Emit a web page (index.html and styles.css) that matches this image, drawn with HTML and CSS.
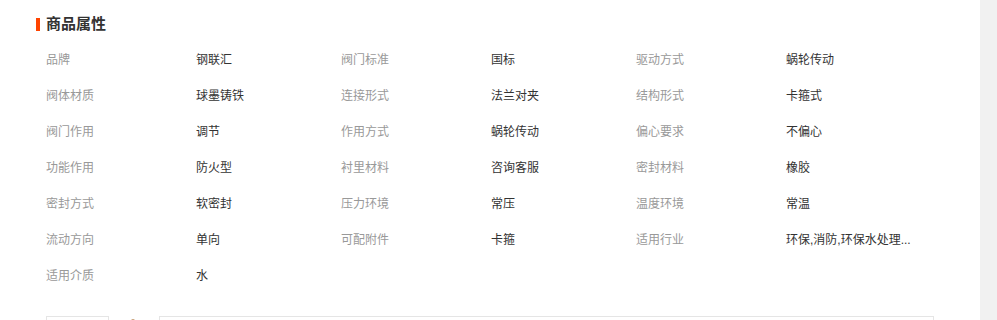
FILE: index.html
```html
<!DOCTYPE html>
<html lang="zh-CN">
<head>
<meta charset="utf-8">
<title>商品属性</title>
<link rel="stylesheet" href="styles.css">
</head>
<body>
<div class="page">
  <div class="main">
    <div class="title"><span class="bar"></span><span class="title-text">商品属性</span></div>
    <div class="attrs">
      <div class="row">
        <span class="label">品牌</span><span class="value">钢联汇</span>
        <span class="label">阀门标准</span><span class="value">国标</span>
        <span class="label">驱动方式</span><span class="value">蜗轮传动</span>
      </div>
      <div class="row">
        <span class="label">阀体材质</span><span class="value">球墨铸铁</span>
        <span class="label">连接形式</span><span class="value">法兰对夹</span>
        <span class="label">结构形式</span><span class="value">卡箍式</span>
      </div>
      <div class="row">
        <span class="label">阀门作用</span><span class="value">调节</span>
        <span class="label">作用方式</span><span class="value">蜗轮传动</span>
        <span class="label">偏心要求</span><span class="value">不偏心</span>
      </div>
      <div class="row">
        <span class="label">功能作用</span><span class="value">防火型</span>
        <span class="label">衬里材料</span><span class="value">咨询客服</span>
        <span class="label">密封材料</span><span class="value">橡胶</span>
      </div>
      <div class="row">
        <span class="label">密封方式</span><span class="value">软密封</span>
        <span class="label">压力环境</span><span class="value">常压</span>
        <span class="label">温度环境</span><span class="value">常温</span>
      </div>
      <div class="row">
        <span class="label">流动方向</span><span class="value">单向</span>
        <span class="label">可配附件</span><span class="value">卡箍</span>
        <span class="label">适用行业</span><span class="value">环保,消防,环保水处理...</span>
      </div>
      <div class="row">
        <span class="label">适用介质</span><span class="value">水</span>
      </div>
    </div>
    <div class="bottom">
      <div class="box box-small"></div>
      <span class="dot"></span>
      <div class="box box-wide"></div>
    </div>
  </div>
  <div class="side"></div>
</div>
</body>
</html>
```

FILE: styles.css
```css
html, body {
  margin: 0;
  padding: 0;
  background: #fff;
  overflow: hidden;
}

body {
  font-family: "Liberation Sans", "Noto Sans CJK SC", sans-serif;
  font-size: 12px;
  color: #333;
}

.page {
  display: flex;
  width: 997px;
  height: 320px;
  overflow: hidden;
}

.main {
  width: 980px;
  flex: none;
  background: #fff;
  padding-left: 36px;
  box-sizing: border-box;
}

.side {
  flex: 1;
  background: #f1f1f1;
}

.title {
  display: flex;
  align-items: center;
  height: 20px;
  margin-top: 14px;
}

.bar {
  width: 4px;
  height: 13px;
  background: #ff4400;
  margin-right: 6px;
}

.title-text {
  font-size: 15px;
  font-weight: bold;
  color: #333;
  line-height: 20px;
}

.attrs {
  margin-top: 8px;
  margin-left: 10px;
}

.row {
  display: flex;
  height: 36px;
  line-height: 36px;
}

.label {
  width: 150px;
  color: #999;
  flex: none;
}

.value {
  width: 145px;
  color: #333;
  flex: none;
  white-space: nowrap;
}

.bottom {
  display: flex;
  align-items: flex-start;
  margin-top: 22px;
  margin-left: 10px;
}

.box {
  height: 30px;
  border: 1px solid #e5e5e5;
  box-sizing: border-box;
  flex: none;
}

.box-small {
  width: 63px;
}

.dot {
  width: 4px;
  height: 3px;
  margin: 3px 0 0 22px;
  border-radius: 2px 2px 0 0;
  background: #c9a27a;
  flex: none;
}

.box-wide {
  width: 775px;
  margin-left: 24px;
}
```
